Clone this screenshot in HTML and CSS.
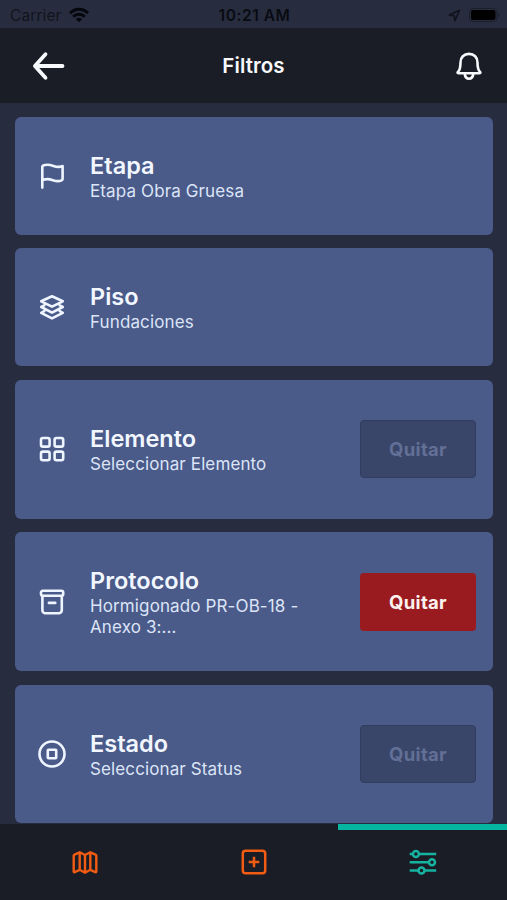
FILE: index.html
```html
<!DOCTYPE html>
<html lang="es">
<head>
<meta charset="utf-8">
<title>Filtros</title>
<link rel="stylesheet" href="styles.css">
</head>
<body>
<div class="screen">
  <div class="status">
    <div class="carrier"><span>Carrier</span>
      <svg width="20" height="16" viewBox="0 0 20 16" fill="none" stroke="#05070c" stroke-width="2.9"><path d="M1 6.200C6 .9 14 .9 19 6.200M4.200 9.800c3.300-3.400 8.300-3.400 11.600 0"/><path d="M7 12.200c1.800-1.800 4.200-1.800 6 0l-3 3z" fill="#05070c" stroke="none"/></svg>
    </div>
    <time class="time">10:21 AM</time>
    <div class="indicators">
      <svg width="13" height="13" viewBox="0 0 13 13" fill="none" stroke="#10131c" stroke-width="1.600" stroke-linejoin="round"><path d="M11.500 1.200 1.200 5.900l5 .8.700 5z"/></svg>
      <svg width="32" height="14" viewBox="0 0 32 14"><rect x=".5" y=".5" width="27.500" height="13" rx="3.500" fill="none" stroke="#1b1f2b"/><rect x="2" y="2" width="24.500" height="10" rx="2" fill="#000"/><path d="M29.500 4.800q2 2.200 0 4.400z" fill="#181c27"/></svg>
    </div>
  </div>
  <header class="header">
    <svg class="back" width="34" height="30" viewBox="0 0 34 30" fill="none" stroke="#f7f9fc" stroke-width="3.800" stroke-linecap="round" stroke-linejoin="round"><path d="M13.500 3.200 2.900 15l10.600 11.800M3.500 15h27"/></svg>
    <h1>Filtros</h1>
    <svg class="bell" width="26" height="30" viewBox="0 0 26 30" fill="none" stroke="#f7f9fc" stroke-width="2.600" stroke-linejoin="round"><path d="M13 2.900c-5.100 0-8.500 3.400-8.500 8.500 0 6-.6 7.500-2.500 9.400-.8.800-.3 1.500.7 1.500h20.600c1 0 1.500-.7.700-1.500-1.900-1.900-2.500-3.400-2.500-9.400 0-5.100-3.400-8.500-8.500-8.500zM8.600 22.500c.4 3.300 1.900 5.200 4.400 5.200s4-1.900 4.400-5.200"/></svg>
  </header>
  <main class="list">
    <section class="card short">
      <svg class="icon" viewBox="0 0 30 30"><path d="M5.300 26.600V5.800c0-.7.400-1 .9-1.300 1.200-.6 2.600-.8 4.400-.8 4 0 7.200 2.200 10.200 2.200 2.200 0 3.700-.8 4.800-.8V18c0 .700-.3 1.100-1 1.400-1.200.6-2.400.7-4 .7-3.600 0-6-2-10-2-2.700 0-4.700.6-5.300 1.300"/></svg>
      <div class="copy"><h2>Etapa</h2><p>Etapa Obra Gruesa</p></div>
    </section>
    <section class="card short">
      <svg class="icon" viewBox="0 0 30 30"><path d="m15 4.200 10.800 5.100L15 14.700 4.200 9.300zM7.300 13.400 4.200 15 15 20.600 25.800 15l-3.100-1.600M7.300 19.200l-3.100 1.600L15 26.400l10.800-5.600-3.100-1.600"/></svg>
      <div class="copy"><h2>Piso</h2><p>Fundaciones</p></div>
    </section>
    <section class="card">
      <svg class="icon" viewBox="0 0 30 30"><rect x="4" y="4" width="8.600" height="8.600" rx="1.900"/><rect x="17.600" y="4" width="8.600" height="8.600" rx="1.900"/><rect x="4" y="17.600" width="8.600" height="8.600" rx="1.900"/><rect x="17.600" y="17.600" width="8.600" height="8.600" rx="1.900"/></svg>
      <div class="copy"><h2>Elemento</h2><p>Seleccionar Elemento</p></div>
      <button class="clear" disabled>Quitar</button>
    </section>
    <section class="card">
      <svg class="icon" viewBox="0 0 30 30"><rect x="4" y="3.800" width="22.200" height="5" rx="1.700"/><path d="M5.400 9v14.200a3 3 0 0 0 3 3h13.400a3 3 0 0 0 3-3V9M11.900 15.900h6.400"/></svg>
      <div class="copy"><h2>Protocolo</h2><p>Hormigonado PR-OB-18 -<br>Anexo 3:...</p></div>
      <button class="clear">Quitar</button>
    </section>
    <section class="card">
      <svg class="icon" viewBox="0 0 30 30"><circle cx="15" cy="15" r="12.500"/><rect x="10.800" y="10.800" width="8.400" height="8.400" rx=".6"/></svg>
      <div class="copy"><h2>Estado</h2><p>Seleccionar Status</p></div>
      <button class="clear" disabled>Quitar</button>
    </section>
  </main>
  <nav class="tabs">
    <div class="tab"><svg viewBox="0 0 30 30" stroke-width="2.400"><path d="M9.700 5.300 4.500 7.600c-.5.200-.8.600-.8 1.100v15.800c0 .6.500.8 1 .6l5-2.300 5.300 2.900 5.300-2.900 5 2.300c.5.200 1 0 1-.6V8.700c0-.5-.3-.9-.8-1.100l-5.200-2.300L15 8zM9.700 5.300v17.500M15 8v17.500M20.300 5.300v17.500"/></svg></div>
    <div class="tab"><svg viewBox="0 0 30 30" stroke-width="2.500"><rect x="3.800" y="3.800" width="22.400" height="22.400" rx="2.800"/><path d="M15 9.700v10.600M9.700 15h10.600"/></svg></div>
    <div class="tab active"><svg viewBox="0 0 30 30" stroke-width="2.500"><path d="M1.700 7h3M11 7h17.200M1.700 15.200h19M1.700 23.400h8.700M16.800 23.400h11.400"/><circle cx="7.900" cy="7" r="3"/><circle cx="24" cy="15.200" r="3"/><circle cx="13.500" cy="23.400" r="3"/></svg></div>
  </nav>
</div>
</body>
</html>
```
FILE: styles.css
```css
* { box-sizing: border-box; }
body { margin: 0; background: #272d3f; font-family: Inter, "Liberation Sans", sans-serif; }
h1, h2, p { margin: 0; }
svg { display: block; flex: none; }
.screen { height: 900px; display: flex; flex-direction: column; overflow: hidden; }
.status { height: 28px; flex: none; display: grid; grid-template-columns: 1fr auto 1fr; align-items: center; padding: 2px 8px 0 10px; font-size: 15.5px; color: #090b12; }
.carrier { display: flex; align-items: center; gap: 7px; letter-spacing: .1px; color: #11141d; }
.time { font-weight: 600; letter-spacing: .55px; }
.indicators { display: flex; align-items: center; justify-content: flex-end; gap: 8px; margin-right: -2px; }
.header { height: 75px; flex: none; display: grid; grid-template-columns: 1fr auto 1fr; align-items: center; padding: 0 25px 0 32px; background: #1a1d25; color: #f7f9fc; }
.bell { justify-self: end; }
h1 { font-size: 20.5px; line-height: 25px; font-weight: 600; letter-spacing: .1px; margin-left: -7px; }
.list { flex: 1; min-height: 0; padding: 14px 14px 1px 14.5px; display: flex; flex-direction: column; gap: 13.7px; }
.card { height: 138.7px; flex: none; display: flex; align-items: center; padding: 0 17px 0 22.500px; border-radius: 6px; background: #4a5a89; }
.card.short { height: 117.8px; }
.icon { width: 30px; height: 30px; margin-right: 23px; fill: none; stroke: #eff5ff; stroke-width: 2.600; stroke-linecap: round; stroke-linejoin: round; }
.copy { flex: 1; padding-top: 1px; }
h2 { font-size: 23.5px; line-height: 28px; font-weight: 600; color: #f2f7ff; }
.copy p { font-size: 17px; line-height: 21px; letter-spacing: .12px; padding-top: 1px; margin-bottom: -1px; color: #dce5f7; }
.clear { width: 116px; height: 58px; border: 0; border-radius: 4px; background: #991b1f; color: #fbf2f0; font: 700 18.5px Inter, "Liberation Sans", sans-serif; letter-spacing: .3px; }
.clear:disabled { border: 1.500px solid #303d5d; background: #394669; color: #626f96; }
.tabs { height: 76px; flex: none; display: grid; grid-template-columns: repeat(3, 1fr); background: #1a1d25; color: #f15b13; }
.tab { display: flex; justify-content: center; align-items: center; }
.tab.active { color: #16b3a1; border-top: 6px solid #06b5a0; padding-bottom: 6px; }
.tab svg { width: 30px; height: 30px; fill: none; stroke: currentColor; stroke-linejoin: round; }
```
